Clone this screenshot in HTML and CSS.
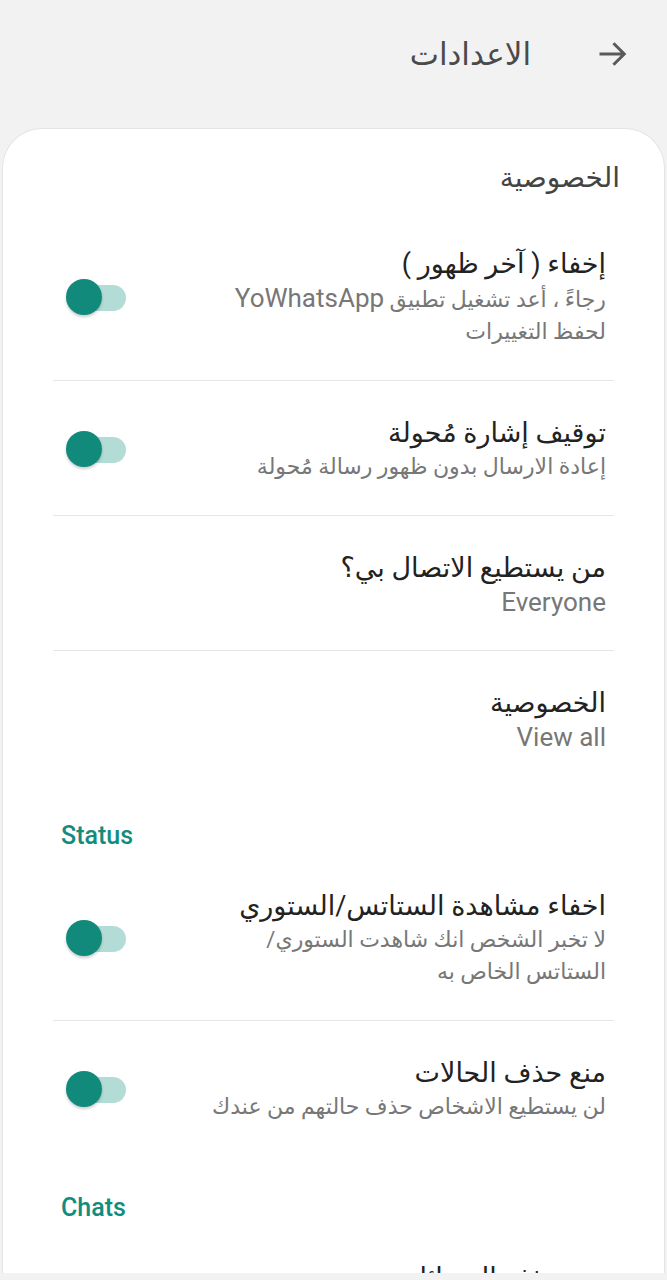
FILE: index.html
```html
<!DOCTYPE html>
<html lang="ar" dir="rtl">

<head>
    <meta charset="UTF-8">
    <meta name="viewport" content="width=device-width, initial-scale=1.0">
    <title>الاعدادات</title>
    <link rel="stylesheet" href="styles.css">
</head>

<body>

    <!-- Top bar -->
    <header class="topbar">
        <svg class="back-icon" viewBox="0 0 24 24" width="36" height="36">
            <path d="M4 12h15M13 5.5l6.5 6.5-6.5 6.5" fill="none" stroke="#5a5a5a" stroke-width="2"
                stroke-linecap="square" />
        </svg>
        <h1 class="topbar-title">الاعدادات</h1>
    </header>

    <!-- Settings card -->
    <main class="card">
        <h2 class="section-title">الخصوصية</h2>

        <div class="row">
            <div class="row-text">
                <div class="row-title">إخفاء ( آخر ظهور )</div>
                <div class="row-sub">رجاءً ، أعد تشغيل تطبيق <span class="latin">YoWhatsApp</span> لحفظ التغييرات</div>
            </div>
            <span class="switch"><span class="knob"></span></span>
        </div>

        <div class="row">
            <div class="row-text">
                <div class="row-title">توقيف إشارة مُحولة</div>
                <div class="row-sub">إعادة الارسال بدون ظهور رسالة مُحولة</div>
            </div>
            <span class="switch"><span class="knob"></span></span>
        </div>

        <div class="row">
            <div class="row-text">
                <div class="row-title">من يستطيع الاتصال بي؟</div>
                <div class="row-sub latin">Everyone</div>
            </div>
        </div>

        <div class="row row--last">
            <div class="row-text">
                <div class="row-title">الخصوصية</div>
                <div class="row-sub latin">View all</div>
            </div>
        </div>

        <h2 class="group-label">Status</h2>

        <div class="row">
            <div class="row-text">
                <div class="row-title">اخفاء مشاهدة الستاتس/الستوري</div>
                <div class="row-sub">لا تخبر الشخص انك شاهدت الستوري/ الستاتس الخاص به</div>
            </div>
            <span class="switch"><span class="knob"></span></span>
        </div>

        <div class="row row--last">
            <div class="row-text">
                <div class="row-title">منع حذف الحالات</div>
                <div class="row-sub">لن يستطيع الاشخاص حذف حالتهم من عندك</div>
            </div>
            <span class="switch"><span class="knob"></span></span>
        </div>

        <h2 class="group-label group-label--chats">Chats</h2>

        <div class="row row--last">
            <div class="row-text">
                <div class="row-title">منع حذف الرسائل</div>
                <div class="row-sub">لن يستطيع الاشخاص حذف رسائلهم</div>
            </div>
            <span class="switch"><span class="knob"></span></span>
        </div>
    </main>

</body>

</html>
```

FILE: styles.css
```css
body {
    margin: 0;
    height: 1280px;
    overflow: hidden;
    background-color: #f2f2f2;
    font-family: Roboto, "DejaVu Sans", sans-serif;
    color: #222;
}

/* Top bar */
.topbar {
    height: 108px;
    display: flex;
    align-items: center;
    gap: 64px;
    padding: 0 36px 0 0;
}

.back-icon {
    display: block;
}

.topbar-title {
    margin: 0;
    font-size: 31px;
    font-weight: 400;
    color: #4a4a4a;
}

/* Card */
.card {
    margin: 20px 2px 0;
    height: 1145px;
    overflow: hidden;
    box-sizing: border-box;
    background-color: #fff;
    border: 1px solid #e4e4e4;
    border-bottom: none;
    border-radius: 40px 40px 0 0;
}

.section-title {
    margin: 0;
    padding: 31px 44px 16px 0;
    line-height: 36px;
    font-size: 28px;
    font-weight: 500;
    color: #444;
}

.group-label {
    margin: 0;
    padding: 36px 0 3px 58px;
    line-height: 30px;
    font-size: 25px;
    font-weight: 500;
    color: #128c7e;
    text-align: left;
}

.group-label--chats {
    padding-top: 38px;
}

/* Rows */
.row {
    display: flex;
    align-items: center;
    margin: 0 50px;
    padding: 34px 8px 32px 13px;
    border-bottom: 1px solid #e6e6e6;
}

.row--last {
    border-bottom: none;
}

.row-text {
    flex: 1;
    max-width: 420px;
}

.row-title {
    font-size: 27px;
    line-height: 36px;
    color: #222;
}

.row-sub {
    font-size: 22px;
    line-height: 32px;
    color: #777;
}

.latin {
    font-size: 26px;
}

/* Switch (on state) */
.switch {
    position: relative;
    margin-right: auto;
    width: 60px;
    height: 36px;
    flex-shrink: 0;
}

.switch::before {
    content: "";
    position: absolute;
    left: 10px;
    right: 0;
    top: 6px;
    height: 26px;
    border-radius: 13px;
    background-color: #b4dcd7;
}

.knob {
    position: absolute;
    left: 0;
    top: 0;
    width: 36px;
    height: 36px;
    border-radius: 50%;
    background-color: #118a7c;
    box-shadow: 0 2px 3px rgba(0, 0, 0, 0.2);
}
```
